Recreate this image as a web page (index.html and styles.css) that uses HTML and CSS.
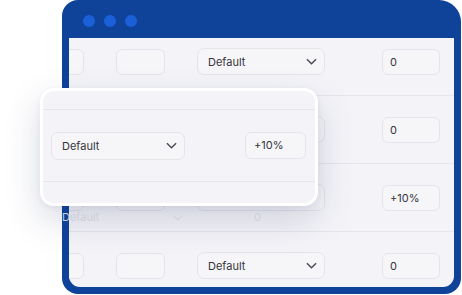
FILE: index.html
```html
<!DOCTYPE html>
<html lang="en">
<head>
    <meta charset="UTF-8">
    <meta name="viewport" content="width=device-width, initial-scale=1.0">
    <title>Pricing rules</title>
    <link rel="stylesheet" href="styles.css">
</head>
<body>
    <div class="stage">
        <div class="window">
            <div class="titlebar">
                <span class="dot"></span><span class="dot"></span><span class="dot"></span>
            </div>
            <div class="content">
                <div class="rows">
                    <div class="row">
                        <div class="box cut"></div>
                        <div class="box"></div>
                        <div class="select">Default <svg class="chev" viewBox="0 0 12 7"><path d="M1 1l5 5 5-5"/></svg></div>
                        <div class="box input">0</div>
                    </div>
                    <div class="row">
                        <div class="box cut"></div>
                        <div class="box"></div>
                        <div class="select">Default <svg class="chev" viewBox="0 0 12 7"><path d="M1 1l5 5 5-5"/></svg></div>
                        <div class="box input">0</div>
                    </div>
                    <div class="row">
                        <div class="box cut"></div>
                        <div class="box"></div>
                        <div class="select">Default <svg class="chev" viewBox="0 0 12 7"><path d="M1 1l5 5 5-5"/></svg></div>
                        <div class="box input">+10%</div>
                    </div>
                    <div class="row">
                        <div class="box cut"></div>
                        <div class="box"></div>
                        <div class="select">Default <svg class="chev" viewBox="0 0 12 7"><path d="M1 1l5 5 5-5"/></svg></div>
                        <div class="box input">0</div>
                    </div>
                </div>
            </div>
        </div>

        <!-- zoomed row lifted above the window -->
        <div class="popup">
            <div class="p-row p-top"></div>
            <div class="p-row p-main">
                <div class="select wide">Default <svg class="chev" viewBox="0 0 12 7"><path d="M1 1l5 5 5-5"/></svg></div>
                <div class="box input narrow">+10%</div>
            </div>
            <div class="p-row p-bottom"></div>
        </div>
        <div class="ghost">
            <span class="ghost-sel">Default <svg class="chev" viewBox="0 0 12 7"><path d="M1 1l5 5 5-5"/></svg></span>
            <span class="ghost-val">0</span>
        </div>
    </div>
</body>
</html>
```

FILE: styles.css
```css
body { margin: 0; background: #fff; font-family: Inter, "Noto Sans", Arial, sans-serif; color: #34343b; }
.stage { position: relative; width: 462px; height: 295px; overflow: hidden; }

.window { margin-left: 62px; width: 399px; height: 294px; background: #0f4299; border-radius: 16px 22px 16px 16px; padding: 0 7px 7px 7px; box-sizing: border-box; display: flex; flex-direction: column; }
.titlebar { height: 38px; display: flex; align-items: center; gap: 9px; padding-left: 14px; padding-top: 4px; box-sizing: border-box; }
.dot { width: 12px; height: 12px; border-radius: 50%; background: #1b5fd9; }

.content { flex: 1; background: #f4f4f8; border-radius: 0 0 11px 11px; overflow: hidden; }
.rows { margin-top: -10px; }
.row { height: 68px; border-bottom: 1px solid #e6e6ec; display: grid; grid-template-columns: 50px 49px 128px 83px; column-gap: 32px; align-items: center; margin-left: -35px; box-sizing: border-box; }
.row .input { margin-left: 25px; width: 58px; }

.box { height: 26px; border: 1px solid #e4e4ea; border-radius: 6px; background: #f6f6f9; box-sizing: border-box; }
.input { font-size: 11px; line-height: 24px; padding-left: 7px; }
.select { height: 27px; border: 1px solid #e4e4ea; border-radius: 7px; background: #f6f6f9; box-sizing: border-box; font-size: 11px; display: flex; align-items: center; justify-content: space-between; padding: 0 7px 0 10px; }
.chev { width: 11px; height: 7px; fill: none; stroke: #4a4a52; stroke-width: 1.5; }

.popup { position: absolute; left: 40px; top: 88px; width: 278px; height: 118px; box-sizing: border-box; border: 3px solid #fff; border-radius: 14px; background: #f4f4f8; box-shadow: 0 14px 36px rgba(40, 50, 100, 0.18), 0 2px 6px rgba(40, 50, 100, 0.06); overflow: hidden; z-index: 2; }
.p-row { border-bottom: 1px solid #e4e4ea; box-sizing: border-box; }
.p-top { height: 19px; }
.p-main { height: 72px; display: flex; align-items: center; gap: 60px; padding-left: 8px; }
.p-bottom { border-bottom: none; }
.select.wide { width: 134px; height: 28px; }
.box.narrow { width: 61px; height: 27px; line-height: 25px; padding-left: 8px; }

.ghost { position: absolute; left: 62px; top: 209px; width: 210px; height: 16px; display: flex; align-items: center; font-size: 11px; color: #cdcfdb; z-index: 3; }
.ghost-sel { width: 121px; display: flex; justify-content: space-between; align-items: center; }
.ghost-sel .chev { stroke: #d3d5df; }
.ghost-val { margin-left: 71px; }
```
